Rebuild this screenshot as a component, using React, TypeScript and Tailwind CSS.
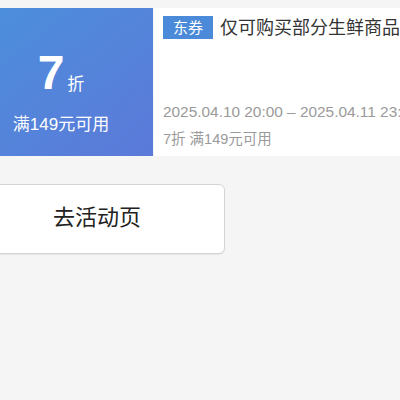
export default function App() {
  const font = { fontFamily: '"Liberation Sans", "Noto Sans CJK SC", sans-serif' };
  return (
    <div className="w-[400px] h-[400px] bg-[#f5f5f5] overflow-hidden" style={font}>
      <div className="ml-[-31px] w-[431px]">
        <div className="pt-[8px] flex h-[156px]">
          <div className="w-[184px] shrink-0 bg-gradient-to-br from-[#4a90dc] to-[#5b79d9] flex flex-col items-center text-white">
            <div className="flex items-end mt-[40px] h-[48px]">
              <span className="text-[48px] leading-[47px] font-bold">7</span>
              <span className="text-[17px] leading-[17px] ml-[3px] mb-[3px]">折</span>
            </div>
            <div className="mt-[19px] text-[17px] leading-[20px]">满149元可用</div>
          </div>
          <div className="flex-1 ml-[1px] bg-white pl-[9px] pt-[8px] whitespace-nowrap overflow-hidden">
            <div className="flex items-center">
              <span className="bg-[#4a8ad8] text-white text-[15px] leading-[23px] w-[53px] text-center">东券</span>
              <span className="ml-[7px] text-[18px] leading-[22px] text-[#333]">仅可购买部分生鲜商品</span>
            </div>
            <div className="mt-[64px] text-[15.4px] leading-[18px] text-[#9a9a9a]">2025.04.10 20:00 – 2025.04.11 23:59</div>
            <div className="mt-[9px] text-[14.5px] leading-[18px] text-[#9a9a9a]">7折 满149元可用</div>
          </div>
        </div>
        <div className="mt-[28px] w-[256px] h-[70px] bg-white border border-[#d4d4d4] rounded-[6px] flex items-center justify-center shadow-[0_1px_1px_rgba(0,0,0,0.06)]">
          <span className="text-[22px] leading-[26px] text-[#222] mb-[2px]">去活动页</span>
        </div>
      </div>
    </div>
  );
}
